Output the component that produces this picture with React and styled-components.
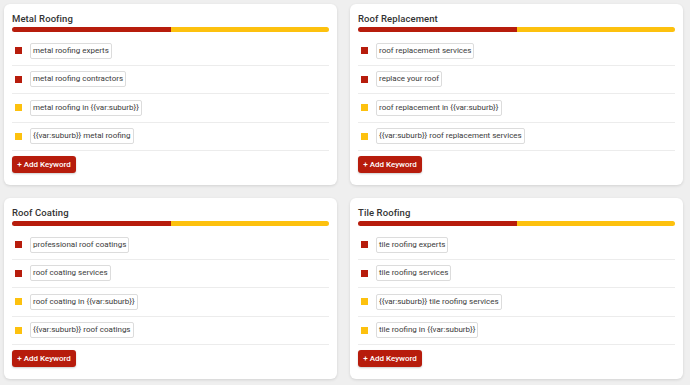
import React from "react";
import styled, { createGlobalStyle } from "styled-components";

const Global = createGlobalStyle`
  html, body { margin: 0; padding: 0; background: #efefef; }
  body { font-family: Roboto, "Liberation Sans", sans-serif; }
`;

const RED = "#b71c0c";
const YELLOW = "#fdc10e";

const Page = styled.div`
  display: grid;
  grid-template-columns: 333px 333px;
  column-gap: 13px;
  row-gap: 13px;
  padding: 4px;
`;

const Card = styled.div`
  background: #fff;
  border-radius: 6px;
  box-shadow: 0 1px 3px rgba(0,0,0,0.12);
  padding: 8px 8px 12px 8px;
  display: flex;
  flex-direction: column;
`;

const Title = styled.div`
  font-size: 9.5px;
  font-weight: 500;
  color: #333;
  line-height: 13px;
  letter-spacing: 0.1px;
`;

const Bar = styled.div`
  display: flex;
  height: 5px;
  margin-top: 2px;
  border-radius: 3px;
  overflow: hidden;
`;

const BarPart = styled.div`
  flex: 1;
  background: ${(p) => p.$color};
`;

const List = styled.div`
  display: flex;
  flex-direction: column;
  margin-top: 5px;
`;

const Row = styled.div`
  display: flex;
  align-items: center;
  gap: 8px;
  height: 28.5px;
  padding-left: 3px;
  border-bottom: 1px solid #ececec;
  box-sizing: border-box;
`;

const Square = styled.span`
  width: 7px;
  height: 7px;
  background: ${(p) => p.$color};
  flex-shrink: 0;
`;

const Keyword = styled.span`
  font-size: 8px;
  color: #3a3a3a;
  border: 1px solid #dcdcdc;
  border-radius: 2px;
  padding: 0 2px;
  line-height: 14px;
`;

const AddButton = styled.button`
  align-self: flex-start;
  margin-top: 5px;
  height: 17px;
  width: 64px;
  padding: 0;
  border: none;
  border-radius: 3px;
  background: ${RED};
  color: #fff;
  font-family: Roboto, "Liberation Sans", sans-serif;
  font-size: 8px;
  font-weight: 500;
  white-space: nowrap;
  box-shadow: 0 1px 2px rgba(0,0,0,0.2);
`;

const cards = [
  {
    title: "Metal Roofing",
    items: [
      ["metal roofing experts", RED],
      ["metal roofing contractors", RED],
      ["metal roofing in {{var:suburb}}", YELLOW],
      ["{{var:suburb}} metal roofing", YELLOW],
    ],
  },
  {
    title: "Roof Replacement",
    items: [
      ["roof replacement services", RED],
      ["replace your roof", RED],
      ["roof replacement in {{var:suburb}}", YELLOW],
      ["{{var:suburb}} roof replacement services", YELLOW],
    ],
  },
  {
    title: "Roof Coating",
    items: [
      ["professional roof coatings", RED],
      ["roof coating services", RED],
      ["roof coating in {{var:suburb}}", YELLOW],
      ["{{var:suburb}} roof coatings", YELLOW],
    ],
  },
  {
    title: "Tile Roofing",
    items: [
      ["tile roofing experts", RED],
      ["tile roofing services", RED],
      ["{{var:suburb}} tile roofing services", YELLOW],
      ["tile roofing in {{var:suburb}}", YELLOW],
    ],
  },
];

export default function App() {
  return (
    <>
      <Global />
      <Page>
        {cards.map((c) => (
          <Card key={c.title}>
            <Title>{c.title}</Title>
            <Bar>
              <BarPart $color={RED} />
              <BarPart $color={YELLOW} />
            </Bar>
            <List>
              {c.items.map(([t, col]) => (
                <Row key={t}>
                  <Square $color={col} />
                  <Keyword>{t}</Keyword>
                </Row>
              ))}
            </List>
            <AddButton>+ Add Keyword</AddButton>
          </Card>
        ))}
      </Page>
    </>
  );
}
